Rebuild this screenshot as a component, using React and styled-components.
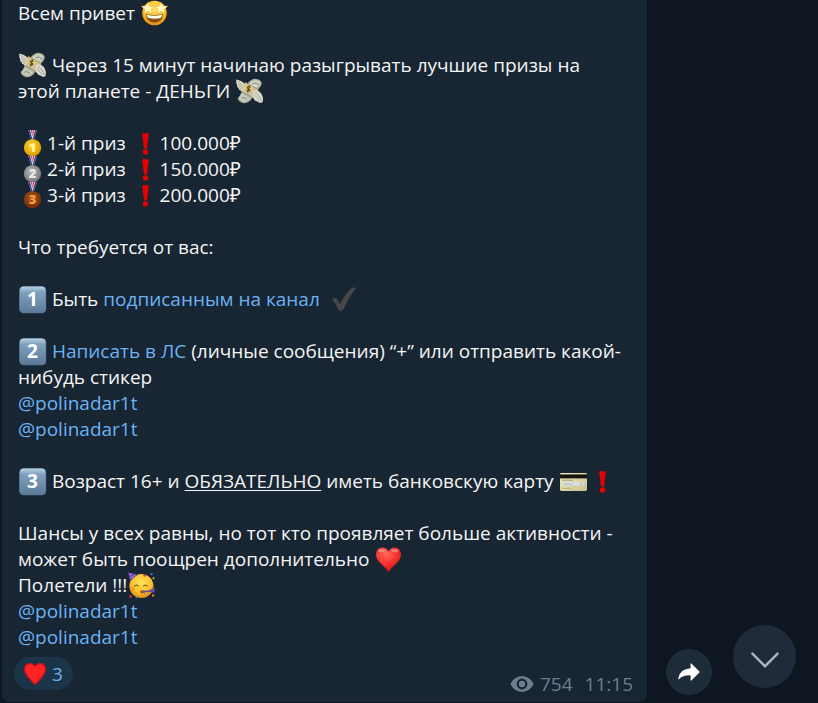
import React from "react";
import styled, { createGlobalStyle } from "styled-components";

const GlobalStyle = createGlobalStyle`
  * {
    box-sizing: border-box;
  }

  body {
    margin: 0;
    background-color: #0e1621;
    font-family: "Open Sans", "Noto Sans", sans-serif;
    font-size: 19px;
    line-height: 26px;
    color: #f5f5f5;
  }
`;

const Chat = styled.main`
  display: flex;
  align-items: flex-end;
  padding: 0 22px 1px 2px;
`;

const Bubble = styled.article`
  flex: 1;
  min-width: 0;
  padding: 0 12px 7px;
  background-color: #182533;
  border-radius: 0 0 8px 8px;
`;

const Text = styled.div`
  padding: 0 4px;
`;

const Paragraph = styled.p`
  margin: 0 0 26px;

  &:last-child {
    margin-bottom: 7px;
  }
`;

const Link = styled.a`
  color: #6ab3f3;
  text-decoration: none;

  &:hover {
    text-decoration: underline;
  }
`;

const Underlined = styled.u`
  text-underline-offset: 2px;
`;

const EmojiSvg = styled.svg`
  display: inline-block;
  width: 29px;
  height: 28px;
  margin-bottom: -2px;
  vertical-align: top;
`;

const Footer = styled.footer`
  display: flex;
  justify-content: space-between;
  align-items: flex-end;
`;

const Reaction = styled.button`
  display: flex;
  align-items: center;
  gap: 6px;
  height: 33px;
  margin-bottom: 5px;
  padding: 0 10px;
  border: none;
  border-radius: 17px;
  background-color: #1c3447;
  color: #6ab3f3;
  font: inherit;
  font-weight: 500;
  line-height: 24px;
  cursor: pointer;
`;

const Meta = styled.div`
  display: flex;
  align-items: center;
  gap: 6px;
  height: 22px;
  padding-right: 2px;
  color: #6d7f8f;

  & time {
    margin-left: 6px;
  }
`;

const Actions = styled.div`
  display: flex;
  align-items: flex-end;
  gap: 21px;
  padding-left: 19px;
`;

const RoundButton = styled.button`
  display: flex;
  align-items: center;
  justify-content: center;
  flex-shrink: 0;
  width: ${(props) => props.$size}px;
  height: ${(props) => props.$size}px;
  margin-bottom: ${(props) => props.$bottom}px;
  padding: 0;
  border: none;
  border-radius: 50%;
  background-color: ${(props) => props.$color};
  cursor: pointer;
`;

const Emoji = ({ label, children }) => (
  <EmojiSvg viewBox="0 0 29 28" role="img" aria-label={label}>
    {children}
  </EmojiSvg>
);

const FaceGradient = ({ id }) => (
  <radialGradient id={id} cx="0.5" cy="0.35" r="0.65">
    <stop offset="0" stopColor="#ffe45e" />
    <stop offset="0.65" stopColor="#fbc02c" />
    <stop offset="1" stopColor="#e08a12" />
  </radialGradient>
);

const StarStruck = () => (
  <Emoji label="восторг">
    <defs>
      <FaceGradient id="starFace" />
    </defs>
    <circle cx="14.5" cy="13" r="12.3" fill="url(#starFace)" />
    <path
      d="M6.3 13.8 Q14.5 16.2 22.7 13.8 Q23 22.6 14.5 22.8 Q6 22.6 6.3 13.8Z"
      fill="#8a4b10"
    />
    <path
      d="M7 14.6 Q14.5 17 22 14.6 Q21.8 17.4 20.6 18 Q14.5 19.4 8.4 18 Q7.2 17.4 7 14.6Z"
      fill="#fffdf2"
    />
    <path
      d="M8.2 2.2 L10 6.2 L14 6.6 L11.2 9.4 L12 13.6 L8.2 11.6 L3.8 13.8 L4.8 9.4 L1.4 6.2 L6 5.8Z"
      fill="#fff6bd"
      stroke="#f0a52a"
      strokeWidth="0.5"
    />
    <path
      d="M20.8 2.2 L19 6.2 L15 6.6 L17.8 9.4 L17 13.6 L20.8 11.6 L25.2 13.8 L24.2 9.4 L27.6 6.2 L23 5.8Z"
      fill="#fff6bd"
      stroke="#f0a52a"
      strokeWidth="0.5"
    />
  </Emoji>
);

const MoneyWings = () => (
  <Emoji label="деньги с крыльями">
    <path
      d="M13 5 Q16 1 20.4 0.8 Q25.4 1.2 26.6 4.6 Q27.2 8 23.4 11 L15.4 22.6 Q12 26 7.6 25 Q3 23.4 2.6 20 Q5 18.4 6.6 14Z"
      fill="#aaac9a"
    />
    <path
      d="M14.4 4.8 Q17.8 1.8 21.2 2 Q25 2.8 25.6 5.4 L22.4 10 L13.8 6.4Z"
      fill="#d2d1c3"
    />
    <path d="M17.4 5.6 Q21.4 3.6 24 7" stroke="#858b7c" fill="none" />
    <path
      d="M7 15 L15.4 20.6 Q12 24.4 7.8 23.8 Q4.4 22.6 3.8 20.2Z"
      fill="#c9cabb"
    />
    <path d="M6.2 20.2 Q9 18.4 12 21.4" stroke="#858b7c" fill="none" />
    <path
      d="M10.6 4.4 L23.4 11.8 L18.6 20 L6 12.6Z"
      fill="#c5c2a7"
      stroke="#8c8766"
      strokeWidth="0.6"
    />
    <path d="M11.4 5 L7 12.6 M21.6 11.2 L17.2 18.8" stroke="#e8bd4c" strokeWidth="2" />
    <ellipse cx="13.6" cy="11.2" rx="4.4" ry="3.8" fill="#e2c678" />
    <path
      d="M15.6 9.4 Q13.4 7.6 12.2 9.2 Q11.6 10.6 13.8 11 Q15.8 11.8 14.6 13 Q12.8 14 11.4 12 M14.6 7.4 L12.4 14.4"
      fill="none"
      stroke="#493c20"
      strokeWidth="1"
    />
    <path
      d="M1.2 1.4 Q7 2.2 10.4 6.6 L7.6 13.6 Q5.8 14 5.6 12.2 Q3.4 12.2 3.6 10 Q1.6 9.6 2.2 7.4 Q0.8 5 1.2 1.4Z"
      fill="#d9d8ca"
    />
    <path
      d="M2.4 3.4 L8.6 8 M3 6.4 L8 9.8 M4.2 9.4 L7.6 11.6"
      stroke="#9da08f"
      strokeWidth="0.8"
    />
    <path
      d="M18.4 12.4 Q23.4 11.6 26.4 15.8 Q28.8 20 27.6 24 Q24.8 26 22.4 23.4 Q19.8 23.4 19 21 Q17.4 20 17.6 17.4Z"
      fill="#d9d8ca"
    />
    <path
      d="M20 14.4 Q24 16.4 26.8 22.8 M19.4 17.2 Q22 19 24.4 23"
      fill="none"
      stroke="#9da08f"
      strokeWidth="0.8"
    />
  </Emoji>
);

const medals = {
  1: { light: "#ffd92e", dark: "#d99a00", digit: "#fff2a0" },
  2: { light: "#b9b9b9", dark: "#777777", digit: "#e8e8e8" },
  3: { light: "#b4571c", dark: "#6e2b08", digit: "#f09a4c" },
};

const Medal = ({ place }) => (
  <Emoji label={`медаль, место ${place}`}>
    <defs>
      <radialGradient id={`medal${place}`} cx="0.45" cy="0.4" r="0.6">
        <stop offset="0" stopColor={medals[place].light} />
        <stop offset="1" stopColor={medals[place].dark} />
      </radialGradient>
    </defs>
    <path d="M10.2 0 L19 0 L15.8 9.4 L13.2 9.4Z" fill="#eeedf4" />
    <path d="M10.2 0 L12 0 L14.4 9 L13.2 9.4Z" fill="#35428c" />
    <path d="M19 0 L17.2 0 L14.6 9 L15.8 9.4Z" fill="#35428c" />
    <path d="M12.8 0 L14.2 0 L14.6 7Z M16.4 0 L15 0 L14.6 7Z" fill="#d63242" />
    <circle cx="14.5" cy="17.6" r="8.7" fill={`url(#medal${place})`} />
    <text
      x="14.5"
      y="22"
      textAnchor="middle"
      fontFamily="Open Sans, sans-serif"
      fontSize="13"
      fontWeight="800"
      fill={medals[place].digit}
    >
      {place}
    </text>
  </Emoji>
);

const Exclamation = () => (
  <Emoji label="восклицательный знак">
    <path d="M11.2 3.2 L17.8 3.2 L16 18.6 L13 18.6Z" fill="#e60000" />
    <circle cx="14.5" cy="22" r="2.7" fill="#e60000" />
  </Emoji>
);

const Keycap = ({ digit }) => (
  <Emoji label={`пункт ${digit}`}>
    <defs>
      <linearGradient id="keycap" x1="0" y1="0" x2="0" y2="1">
        <stop offset="0" stopColor="#b4d2e4" />
        <stop offset="0.22" stopColor="#7fa1bf" />
        <stop offset="1" stopColor="#5d7b98" />
      </linearGradient>
    </defs>
    <rect x="1.2" y="0.2" width="27" height="27" rx="4.5" fill="#5d7a96" />
    <rect x="1.8" y="0.6" width="25.8" height="25.6" rx="4" fill="url(#keycap)" />
    <text
      x="14.5"
      y="20"
      textAnchor="middle"
      fontFamily="Open Sans, sans-serif"
      fontSize="19"
      fontWeight="700"
      fill="#ffffff"
    >
      {digit}
    </text>
  </Emoji>
);

const Check = () => (
  <Emoji label="галочка">
    <path
      d="M2.4 13.4 Q4.4 10.8 6.2 12.2 Q8.4 14.4 9.8 18 Q15.2 7.8 21.4 2.2 Q23.6 0.8 26.2 2 Q18.2 12 13.6 23.2 Q11.6 26 8.6 24.2 Q6.2 17.6 2.4 13.4Z"
      fill="#474747"
    />
  </Emoji>
);

const CreditCard = () => (
  <Emoji label="банковская карта">
    <defs>
      <linearGradient id="card" x1="0" y1="0" x2="1" y2="1">
        <stop offset="0" stopColor="#f3eec6" />
        <stop offset="1" stopColor="#c9c08c" />
      </linearGradient>
    </defs>
    <rect x="1" y="5" width="27" height="18" rx="1.4" fill="url(#card)" />
    <rect x="1" y="6.4" width="27" height="4" fill="#15150f" />
    <path d="M3 12.2 H14" stroke="#9a9472" strokeWidth="0.8" />
    <rect x="3" y="14" width="22" height="3.4" fill="#dde2df" />
    <path
      d="M4 16.4 Q5 14.4 6 16 T8 15.8 T10 15.8 T13 15.8 L14 15.4 M20 15.8 H24"
      fill="none"
      stroke="#9aa8bb"
      strokeWidth="0.8"
    />
    <path d="M3 20.4 H12" stroke="#b6ad7d" strokeWidth="0.8" />
  </Emoji>
);

const ShinyHeart = () => (
  <Emoji label="сердце">
    <defs>
      <radialGradient id="heart" cx="0.4" cy="0.25" r="0.8">
        <stop offset="0" stopColor="#ff6a60" />
        <stop offset="0.5" stopColor="#f8352f" />
        <stop offset="1" stopColor="#c80d10" />
      </radialGradient>
    </defs>
    <path
      d="M14.5 26 Q11.6 21.6 6.6 17.4 Q1.8 12.8 2 8 Q2.4 2 8 1.4 Q12.4 1.4 14.5 5.4 Q16.6 1.4 21 1.4 Q26.6 2 27 8 Q27.2 12.8 22.4 17.4 Q17.4 21.6 14.5 26Z"
      fill="url(#heart)"
    />
    <ellipse cx="7.6" cy="4.6" rx="3.4" ry="1.6" fill="#ff9a90" opacity="0.7" />
    <ellipse cx="21" cy="4.6" rx="3.4" ry="1.6" fill="#ff9a90" opacity="0.7" />
  </Emoji>
);

const PartyFace = () => (
  <Emoji label="праздник">
    <defs>
      <FaceGradient id="partyFace" />
    </defs>
    <circle cx="14.4" cy="14" r="12" fill="url(#partyFace)" />
    <path d="M0.8 0.2 L10.8 3 Q7.4 4.4 3.6 9.4Z" fill="#6a4cae" />
    <path d="M2.4 2.8 L5.2 1.6 M3.2 6.4 L8.6 2.6" stroke="#a58be0" />
    <path
      d="M7.4 14 Q9.4 11.8 11.4 13.8 M16.4 13.8 Q18.4 11.8 20.4 14"
      fill="none"
      stroke="#6b3d0c"
      strokeWidth="1"
      strokeLinecap="round"
    />
    <circle cx="5.6" cy="17" r="2.2" fill="#f28b2a" opacity="0.6" />
    <ellipse cx="15" cy="19.8" rx="1.8" ry="1.6" fill="#b5501a" />
    <path d="M15.4 18.8 L21.6 18.4 L27.4 15.6 L27.8 20.6 L21.6 20 L15.6 20.8Z" fill="#6b4c9c" />
    <path d="M17 21.4 L18.6 22.6 M20 21 L21.2 22.4" stroke="#8f6fbc" />
    <rect x="23.4" y="1" width="2.2" height="2.2" fill="#4568c8" />
    <rect x="25.6" y="5.4" width="1.8" height="1.8" fill="#f1b92b" />
    <rect x="25" y="22.4" width="2.2" height="2.2" fill="#e77a26" />
    <circle cx="3.6" cy="24.4" r="1.3" fill="#d8344d" />
    <circle cx="17.6" cy="3.4" r="1.2" fill="#d8344d" />
    <circle cx="9.4" cy="25.6" r="1" fill="#4568c8" />
  </Emoji>
);

const HeartIcon = () => (
  <svg width="22" height="22" viewBox="0 0 22 22" aria-hidden="true">
    <path
      d="M11 21.2 Q8.6 19.6 3.2 13 Q0.2 8.8 0.6 5.2 Q1.4 0.8 5.6 0.6 Q9 0.4 11 3.2 Q13 0.4 16.4 0.6 Q20.6 0.8 21.4 5.2 Q21.8 8.8 18.8 13 Q13.4 19.6 11 21.2Z"
      fill="#ff2323"
      stroke="#c80e1e"
      strokeWidth="1.2"
    />
  </svg>
);

const EyeIcon = () => (
  <svg width="24" height="16" viewBox="0 0 24 16" aria-hidden="true">
    <path
      fillRule="evenodd"
      d="M12 0 Q20 0.4 23.6 8 Q20 15.6 12 16 Q4 15.6 0.4 8 Q4 0.4 12 0Z M12 2.6 A5.4 5.4 0 1 0 12 13.4 A5.4 5.4 0 1 0 12 2.6Z"
      fill="#6d7f8f"
    />
    <circle cx="12" cy="8" r="3.2" fill="#6d7f8f" />
  </svg>
);

const ShareIcon = () => (
  <svg width="22" height="18" viewBox="0 0 22 18" aria-hidden="true">
    <path
      d="M12.6 0.6 Q12.8 0 13.4 0.4 L21.4 8.4 Q21.8 9 21.4 9.6 L13.4 17.4 Q12.8 18 12.6 17.2 V12.4 Q5 12 1.2 16 Q0.2 16.8 0.2 15.4 Q1.6 6 12.6 5.2Z"
      fill="#ffffff"
    />
  </svg>
);

const ArrowDownIcon = () => (
  <svg width="28" height="22" viewBox="0 0 28 22" aria-hidden="true">
    <path
      d="M1.4 7.6 L14 20.2 L26.6 7.6"
      fill="none"
      stroke="#adb3ba"
      strokeWidth="2.4"
      strokeLinecap="round"
    />
  </svg>
);

const prizes = [
  { place: 1, sum: "100.000₽" },
  { place: 2, sum: "150.000₽" },
  { place: 3, sum: "200.000₽" },
];

const Mention = () => <Link href="#polinadar1t">@polinadar1t</Link>;

const App = () => {
  return (
    <>
      <GlobalStyle />
      <Chat>
        <Bubble>
          <Text>
            <Paragraph>
              Всем привет <StarStruck />
            </Paragraph>

            <Paragraph>
              <MoneyWings /> Через 15 минут начинаю разыгрывать лучшие призы на
              <br />
              этой планете - ДЕНЬГИ <MoneyWings />
            </Paragraph>

            <Paragraph>
              {prizes.map(({ place, sum }) => (
                <React.Fragment key={place}>
                  <Medal place={place} />
                  {place}-й приз <Exclamation />
                  {sum}
                  <br />
                </React.Fragment>
              ))}
            </Paragraph>

            <Paragraph>Что требуется от вас:</Paragraph>

            <Paragraph>
              <Keycap digit="1" /> Быть{" "}
              <Link href="#channel">подписанным на канал</Link>
              {"\u00a0 "}
              <Check />
            </Paragraph>

            <Paragraph>
              <Keycap digit="2" /> <Link href="#message">Написать в ЛС</Link>{" "}
              (личные сообщения) “+” или отправить какой-нибудь стикер
              <br />
              <Mention />
              <br />
              <Mention />
            </Paragraph>

            <Paragraph>
              <Keycap digit="3" /> Возраст 16+ и{" "}
              <Underlined>ОБЯЗАТЕЛЬНО</Underlined> иметь банковскую карту{" "}
              <CreditCard />
              <Exclamation />
            </Paragraph>

            <Paragraph>
              Шансы у всех равны, но тот кто проявляет больше активности - может
              быть поощрен дополнительно <ShinyHeart />
              <br />
              Полетели !!!
              <PartyFace />
              <br />
              <Mention />
              <br />
              <Mention />
            </Paragraph>
          </Text>

          <Footer>
            <Reaction type="button">
              <HeartIcon />3
            </Reaction>
            <Meta>
              <EyeIcon />
              <span>754</span>
              <time>11:15</time>
            </Meta>
          </Footer>
        </Bubble>

        <Actions>
          <RoundButton
            type="button"
            aria-label="Поделиться"
            $size={46}
            $bottom={7}
            $color="#1e2c3a"
          >
            <ShareIcon />
          </RoundButton>
          <RoundButton
            type="button"
            aria-label="Вниз"
            $size={63}
            $bottom={14}
            $color="#1f2b3a"
          >
            <ArrowDownIcon />
          </RoundButton>
        </Actions>
      </Chat>
    </>
  );
};

export default App;
